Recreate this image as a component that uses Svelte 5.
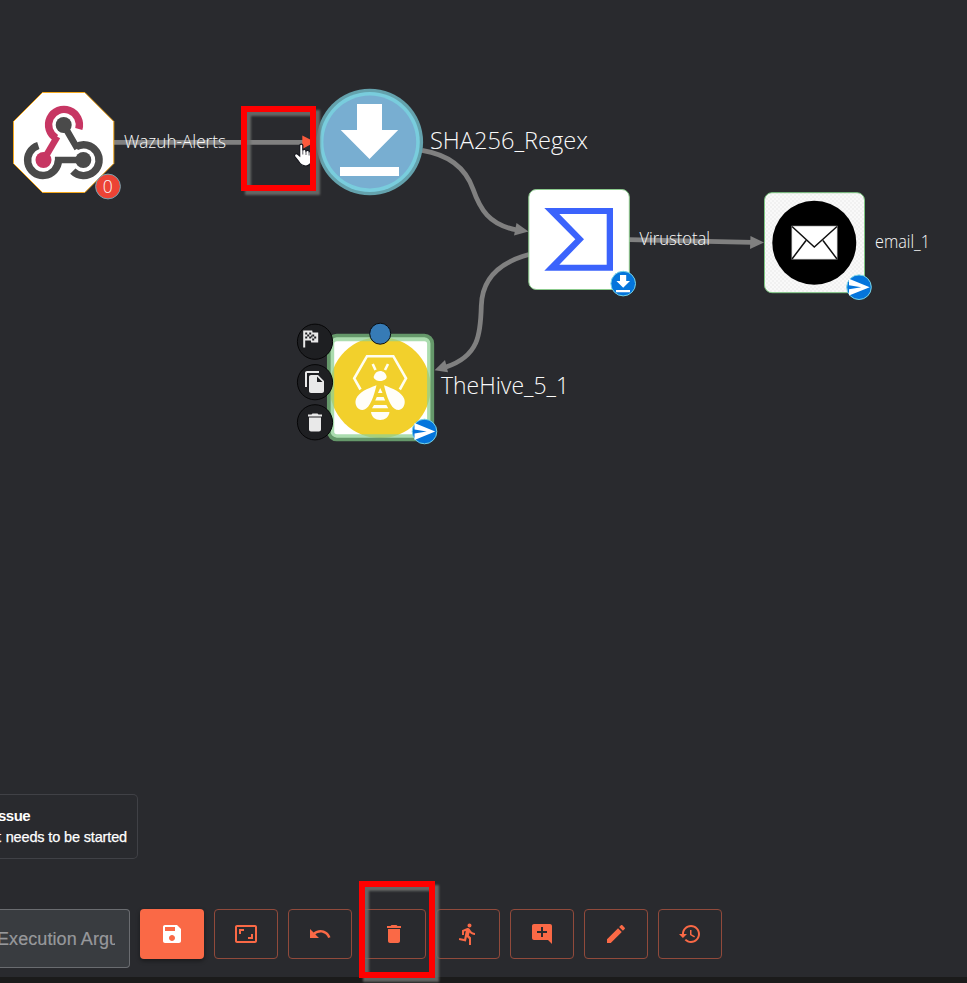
<script>
  const tools = [
    { name: 'Save', primary: true, d: 'M17 3H5c-1.11 0-2 .9-2 2v14c0 1.1.89 2 2 2h14c1.1 0 2-.9 2-2V7l-4-4zm-5 16c-1.66 0-3-1.34-3-3s1.34-3 3-3 3 1.34 3 3-1.34 3-3 3zm3-10H5V5h10v4z' },
    { name: 'Fit', d: 'M19 12h-2v3h-3v2h5v-5zM7 9h3V7H5v5h2V9zm14-6H3c-1.1 0-2 .9-2 2v14c0 1.1.9 2 2 2h18c1.1 0 2-.9 2-2V5c0-1.1-.9-2-2-2zm0 16.01H3V4.99h18v14.02z' },
    { name: 'Undo', d: 'M12.5 8c-2.65 0-5.05.99-6.9 2.6L2 7v9h9l-3.62-3.62c1.39-1.16 3.16-1.88 5.12-1.88 3.54 0 6.55 2.31 7.6 5.5l2.37-.78C21.08 11.03 17.15 8 12.5 8z' },
    { name: 'Delete', d: 'M6 19c0 1.1.9 2 2 2h8c1.1 0 2-.9 2-2V7H6v12zM19 4h-3.5l-1-1h-5l-1 1H5v2h14V4z' },
    { name: 'Run', d: 'M13.49 5.48c1.1 0 2-.9 2-2s-.9-2-2-2-2 .9-2 2 .9 2 2 2zm-3.6 13.9 1-4.4 2.1 2v6h2v-7.5l-2.1-2 .6-3c1.3 1.5 3.3 2.5 5.5 2.5v-2c-1.9 0-3.5-1-4.3-2.4l-1-1.6c-.4-.6-1-1-1.7-1-.3 0-.5.1-.8.1l-5.2 2.2v4.7h2v-3.4l1.8-.7-1.6 8.1-4.9-1-.4 2 7 1.4z' },
    { name: 'Comment', d: 'M21.99 4c0-1.1-.89-2-1.99-2H4c-1.1 0-2 .9-2 2v12c0 1.1.9 2 2 2h14l4 4-.01-18zM17 11h-4v4h-2v-4H7V9h4V5h2v4h4v2z' },
    { name: 'Edit', d: 'M3 17.25V21h3.75L17.81 9.94l-3.75-3.75L3 17.25zM20.71 7.04c.39-.39.39-1.02 0-1.41l-2.34-2.34c-.39-.39-1.02-.39-1.41 0l-1.83 1.83 3.75 3.75 1.83-1.83z' },
    { name: 'History', d: 'M13 3c-4.97 0-9 4.03-9 9H1l3.89 3.89.07.14L9 12H6c0-3.87 3.13-7 7-7s7 3.13 7 7-3.13 7-7 7c-1.93 0-3.68-.79-4.94-2.06l-1.42 1.42C8.27 19.99 10.51 21 13 21c4.97 0 9-4.03 9-9s-4.03-9-9-9zm-1 5v5l4.28 2.54.72-1.21-3.5-2.08V8H12z' }
  ];
  const nodeActions = [
    { x: 298.2, y: 326.5, s: 1, cy: 341.7, d: 'M14.4,6H20V16H13L12.6,14H7V21H5V4H14L14.4,6M14,14H16V12H18V10H16V8H14V10L13,8V6H11V8H9V6H7V8H9V10H7V12H9V10H11V12H13V10L14,12V14M11,10V8H13V10H11M14,10H16V12H14V10Z' },
    { x: 303, y: 370, s: 1, cy: 382.2, d: 'M16 1H4c-1.1 0-2 .9-2 2v14h2V3h12V1zm-1 4 6 6v10c0 1.1-.9 2-2 2H7.99C6.89 23 6 22.1 6 21l.01-14c0-1.1.89-2 1.99-2h7zm-1 7h5.5L14 6.5V12z' },
    { x: 303, y: 410.4, s: 1, cy: 422.3, d: tools[3].d }
  ];
  const labels = [
    { t: 'Wazuh-Alerts', x: 124, y: 147.5, size: 18, w: 102 },
    { t: 'SHA256_Regex', x: 430, y: 149.3, size: 24, w: 158 },
    { t: 'Virustotal', x: 639.5, y: 244.7, size: 18, w: 70.5 },
    { t: 'email_1', x: 875, y: 248, size: 18, w: 55 },
    { t: 'TheHive_5_1', x: 441, y: 394, size: 24, w: 128 }
  ];
  const marks = [
    { x: 244, y: 109, w: 69, h: 79 },
    { x: 362, y: 884, w: 70, h: 91 }
  ];
</script>

<main class="app">
  <svg class="graph" width="967" height="983" viewBox="0 0 967 983">
    <defs>
      <pattern id="check" width="4" height="4" patternUnits="userSpaceOnUse">
        <rect width="4" height="4" fill="#f9f9f9" /><rect width="2" height="2" fill="#f1f1f1" /><rect x="2" y="2" width="2" height="2" fill="#f1f1f1" />
      </pattern>
      <clipPath id="hive"><rect x="330" y="337" width="101" height="101" rx="6" /></clipPath>
    </defs>

    <g fill="none" stroke="#808080" stroke-width="4.8">
      <path d="M114 142.3H303" />
      <path d="M422 150.3C451 155 466 169 473 189S489 225 517 230" />
      <path d="M629 239.7L752 242.4" />
      <path d="M529 254.5C501 262 482 278 481.3 306S479 356 446 367" />
    </g>
    <g fill="#808080">
      <path d="M516.5 223L528.5 231.5L514 235.5Z" />
      <path d="M750.5 236L764 242.5L750 249Z" />
      <path d="M434.5 370.3L445 360L448 372.3Z" />
    </g>
    <path d="M302.3 135.5L315 142L302.3 149Z" fill="#fb5a3c" />

    <path d="M42.5 92.5H84.8L113.8 121.5V163.5L84.8 192.5H42.5L13.5 163.5V121.5Z" fill="#fff" stroke="#f5a81c" />
    <g fill="none" stroke-width="7.4">
      <path d="M38.3 145.4A15.4 15.4 0 1 0 58.4 160.2" stroke="#4a4a4a" />
      <path d="M72.8 171.1A15.4 15.4 0 1 0 76 146.9" stroke="#4a4a4a" />
      <path d="M78.8 129A15.4 15.4 0 1 0 56.2 138.1" stroke="#c73663" />
    </g>
    <g fill="none" stroke-width="6.6">
      <path d="M54.9 160H83.3M63.7 125L77.4 148.6" stroke="#4a4a4a" />
      <path d="M57.3 136.6L43.5 160.2" stroke="#c73663" />
    </g>
    <circle cx="63.7" cy="125" r="8" fill="#4a4a4a" /><circle cx="83.3" cy="160" r="8" fill="#4a4a4a" /><circle cx="43.5" cy="160" r="8" fill="#c73663" />
    <circle cx="108" cy="186.5" r="12.4" fill="#ec4335" stroke="#72a5b2" />
    <text x="102.8" y="192.7" font-size="18" textLength="10" lengthAdjust="spacingAndGlyphs">0</text>

    <circle cx="369.8" cy="142" r="53.3" fill="#64a2ad" />
    <circle cx="369.8" cy="142" r="50" fill="#79cddd" />
    <circle cx="369.8" cy="142" r="46.4" fill="#78aed1" />
    <path d="M357 104H382V130H398.2L369.5 159L340.7 130H357ZM340 167H399V176H340Z" fill="#fff" />

    <rect x="528.8" y="189.5" width="100.5" height="100" rx="7.5" fill="#fff" stroke="#8bca8c" />
    <path fill-rule="evenodd" d="M544.3 208H613V270.8H544.3L575.3 239.2ZM559.3 214L584 239.2L559.3 264.8H606.7V214Z" fill="#3b63fc" />
    <circle cx="623.2" cy="283.6" r="12.3" fill="#0475dc" stroke="#79d4e5" />
    <path d="M620 275H626.2V281H630L623.2 287.8L616.4 281H620ZM616 290H630V292.2H616Z" fill="#fff" />

    <rect x="764.5" y="192.7" width="100" height="100" rx="7.5" fill="url(#check)" stroke="#7cc681" />
    <circle cx="814.3" cy="242.7" r="42" fill="#000" />
    <rect x="791.8" y="226" width="45.4" height="33.2" fill="#fff" stroke="#888" stroke-width=".6" />
    <path d="M792 226.5L814.3 247L837 226.5M806 240.5L792 259M823 240.5L837 259" fill="none" stroke="#111" stroke-width="1.5" />

    <g clip-path="url(#hive)">
      <rect x="328" y="334" width="106" height="107" fill="#fff" />
      <circle cx="380.2" cy="387.5" r="50.5" fill="#f2d02c" />
    </g>
    <rect x="332" y="339" width="97.3" height="97.5" rx="5" fill="none" stroke="#8fd094" stroke-opacity=".75" stroke-width="4.4" />
    <rect x="328.8" y="335.5" width="103.5" height="104" rx="8" fill="none" stroke="#65986a" stroke-width="3.7" />
    <g fill="none" stroke="#fffef0" stroke-width="2.6">
      <path d="M360.5 389.5L354.2 378.3L367 356.2H393.3L406 378.3L399.8 389.5" />
      <path d="M372.7 364L375.5 370M388 364L385 370" />
    </g>
    <g fill="#fffef8">
      <path d="M373.6 377C374.5 373 377 371 380.1 371S386 373 386.7 377C386.5 379.4 383 381 380.1 381S374 379.5 373.6 377Z" />
      <path d="M376.5 385.3C374 396 370 408 364 409.8C358 411 354 405 356 399C359 392 367 389 376.5 385.3Z" />
      <path d="M384 385.3C386.5 396 390.5 408 396.5 409.8C402.5 411 406 405 404.3 399C401.5 392 393.5 389 384 385.3Z" />
      <path d="M380.2 388L382.5 393H378ZM376.8 397H383.6L385.2 400.5H375.2ZM374 405H386.4L388.3 408.3H372ZM371 412H389.5C389 417 385 420 380.2 420S371.5 417 371 412Z" />
    </g>
    <circle cx="380.2" cy="333.7" r="10.5" fill="#367bb6" stroke="#0a0d10" />
    {#each [[859, 287.2], [424.5, 431.5]] as p}
      <g transform="translate({p[0]} {p[1]})">
        <circle r="12.3" fill="#0475dc" stroke="#79d4e5" />
        <path d="M-10 -8.4L10.7 0L-10 8.4V2L2.2 0L-10 -2Z" fill="#fff" />
      </g>
    {/each}
    {#each nodeActions as a}
      <circle cx="315" cy={a.cy} r="17.6" fill="#1e1f22" stroke="#060607" />
      <path d={a.d} transform="translate({a.x} {a.y}) scale({a.s})" fill="#e9e9e9" />
    {/each}

    {#each labels as l}
      <text x={l.x} y={l.y} font-size={l.size} textLength={l.w} lengthAdjust="spacingAndGlyphs">{l.t}</text>
    {/each}

    <path d="M299.7 145.4C300 143.7 302.6 143.7 302.8 145.4V150.3C303.5 149 305.7 149.2 306 151C307 149.8 308.8 150.2 309.2 151.7C310.5 150.8 312 151.5 312 153V159C312 163 309 166 306 166C302 166 300 164 298 160.5L294.6 156.3C294 154 296.2 153 297.7 154.3L299.7 156Z" fill="#fff" stroke="#16171e" stroke-width="1.2" />
    <path d="M302.8 150V154.5M306 151V155M309.1 152V155.5" stroke="#33343b" stroke-width=".8" />
  </svg>

  <section class="notice">
    <strong>ssue</strong>
    <span><i>t</i> needs to be started</span>
  </section>

  <footer class="toolbar">
    <div class="argument"><span>Execution Argu</span></div>
    {#each tools as tool}
      <button class:primary={tool.primary} aria-label={tool.name}>
        <svg width="24" height="24" viewBox="0 0 24 24"><path d={tool.d} /></svg>
      </button>
    {/each}
  </footer>
  <div class="strip"></div>

  <svg class="marks" width="967" height="983" viewBox="0 0 967 983">
    {#each marks as m}
      <rect x={m.x} y={m.y} width={m.w} height={m.h} />
    {/each}
  </svg>
</main>

<style>
  :global(body) { margin: 0; background: #292a2e; }
  .app {
    position: relative;
    display: flex;
    flex-direction: column;
    width: 967px;
    height: 983px;
    overflow: hidden;
    background: #292a2e;
    font-family: "Liberation Sans", Arial, sans-serif;
  }
  .graph, .marks { position: absolute; inset: 0; pointer-events: none; }
  .graph text { font-family: "Open Sans", "Noto Sans", sans-serif; font-weight: 300; fill: #fafafa; }
  .marks rect {
    fill: none;
    stroke: #f00;
    stroke-width: 6;
    filter: drop-shadow(4px 4px 1.2px rgba(110, 113, 110, .85));
  }
  .notice {
    box-sizing: border-box;
    display: flex;
    flex-direction: column;
    align-items: flex-end;
    width: 138px;
    height: 65px;
    margin-top: auto;
    padding: 12px 10px 0 0;
    border: 1px solid #404146;
    border-left: 0;
    border-radius: 0 5px 5px 0;
    color: #fff;
    font-size: 15px;
    line-height: 18px;
    white-space: nowrap;
  }
  .notice strong { align-self: flex-start; margin-left: -2px; letter-spacing: -.5px; }
  .notice span { margin-top: 3px; font-size: 14.5px; letter-spacing: -.15px; -webkit-text-stroke: .25px #fff; }
  .notice i { margin-right: 1px; font-style: normal; }
  .toolbar {
    display: flex;
    align-items: flex-start;
    gap: 10px;
    height: 68px;
    margin-top: 50px;
  }
  .argument {
    box-sizing: border-box;
    width: 130px;
    height: 59px;
    padding-right: 14px;
    border: 1px solid #6a6c70;
    border-left: 0;
    border-radius: 0 4px 4px 0;
    background: #393c40;
    color: #97989b;
    font-size: 18px;
    line-height: 58px;
    white-space: nowrap;
    -webkit-text-stroke: .2px #97989b;
  }
  .argument span { display: block; overflow: hidden; text-indent: -3px; letter-spacing: .08px; }
  button {
    box-sizing: border-box;
    display: flex;
    flex: none;
    align-items: center;
    justify-content: center;
    width: 64px;
    height: 50px;
    padding: 0;
    border: 1px solid #914a3b;
    border-radius: 4px;
    background: transparent;
    fill: #fa6946;
  }
  button.primary {
    border: 0;
    background: #fa6946;
    fill: #fff;
    box-shadow: 0 2px 4px rgba(0, 0, 0, .4);
  }
  .strip { height: 6px; background: #1b1b1b; }
</style>
